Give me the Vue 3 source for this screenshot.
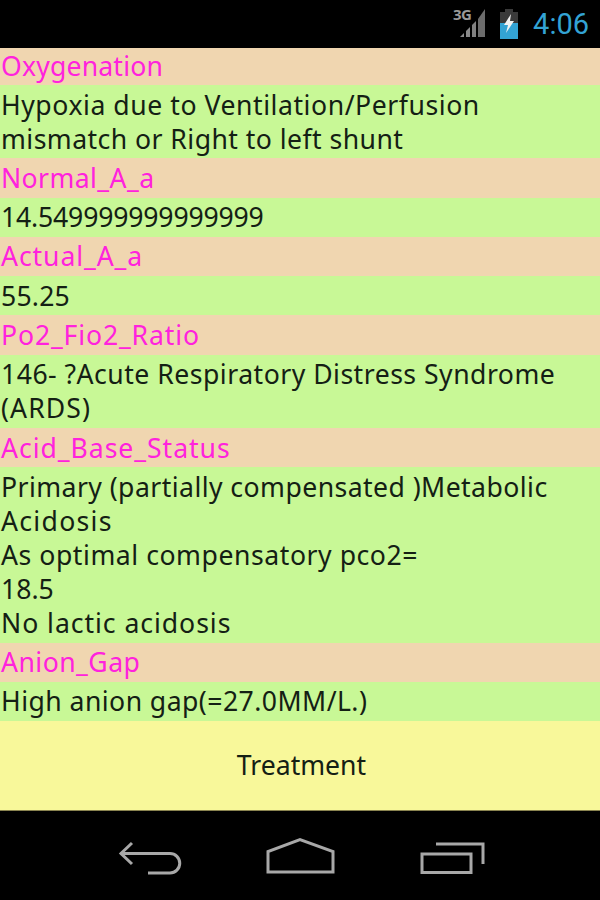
<script setup>
const rows = [
  { title: 'Oxygenation', ts: 0.18, lines: [['Hypoxia due to Ventilation/Perfusion', 0.55], ['mismatch or Right to left shunt', 0.45]] },
  { title: 'Normal_A_a', ts: 0.4, lines: [['14.549999999999999', -0.17]] },
  { title: 'Actual_A_a', ts: 0.9, lines: [['55.25', 0.2]] },
  { title: 'Po2_Fio2_Ratio', ts: 0.85, lines: [['146- ?Acute Respiratory Distress Syndrome', 0.49], ['(ARDS)', 1.1]] },
  { title: 'Acid_Base_Status', ts: 0.95, lines: [['Primary (partially compensated )Metabolic', 0.44], ['Acidosis', 1.3], ['As optimal compensatory pco2=', 0.55], ['18.5', 0], ['No lactic acidosis', 0.95]] },
  { title: 'Anion_Gap', ts: 0.45, lines: [['High anion gap(=27.0MM/L.)', 0.45]] },
]
</script>

<template>
  <div class="screen">
    <header class="status">
      <svg class="signal" width="33" height="34" viewBox="0 -4 33 34">
        <text x="0" y="12" class="net">3G</text>
        <path d="M7 29 L11 25 V29 Z" fill="#8a8a8a" />
        <path d="M13 23 L17 19 V29 H13 Z" fill="#8a8a8a" />
        <path d="M19 17 L23 13 V29 H19 Z" fill="#808080" />
        <path d="M25 11 L32 1 V29 H25 Z" fill="#6c6c6c" />
      </svg>
      <svg class="battery" width="18" height="30" viewBox="0 0 18 30">
        <path d="M5 0 H13 V3 H18 V30 H0 V3 H5 Z" fill="#3a3a3a" />
        <rect x="0" y="14" width="18" height="16" fill="#33a3d4" />
        <path d="M11 5 L4 16 H8 L6 24 L14 12 H10 Z" fill="#f2f2f2" />
      </svg>
      <span class="clock">4:06</span>
    </header>

    <main class="content">
      <template v-for="row in rows" :key="row.title">
        <div class="row title" :style="{ letterSpacing: row.ts + 'px' }">{{ row.title }}</div>
        <div class="row body">
          <div v-for="line in row.lines" :key="line[0]" :style="{ letterSpacing: line[1] + 'px' }">{{ line[0] }}</div>
        </div>
      </template>
      <button class="action">Treatment</button>
    </main>

    <nav class="nav">
      <svg width="400" height="89" viewBox="0 1 400 89" fill="none" stroke="#a8a8a8" stroke-width="3">
        <path d="M32 33 L21 43.5 L32 54" />
        <path d="M22 43.5 H70 A 9.75 9.75 0 0 1 70 63 H48" />
        <path d="M168 62 V41.5 L200 29.5 L233 41.5 V62 Z" />
        <rect x="322" y="44" width="49" height="18.5" />
        <path d="M336 34 H383 V54" />
      </svg>
    </nav>
  </div>
</template>

<style scoped>
.screen {
  width: 600px;
  height: 900px;
  display: flex;
  flex-direction: column;
  background: #000;
  font-family: "Noto Sans", "Open Sans", sans-serif;
  overflow: hidden;
}
.status {
  height: 47.5px;
  flex: none;
  display: flex;
  align-items: center;
  justify-content: flex-end;
  padding-right: 11px;
  box-sizing: border-box;
}
.signal { margin-right: 14px; margin-bottom: 5px; }
.net { font-size: 15px; font-weight: 700; letter-spacing: -0.5px; fill: #9a9a9a; font-family: "Noto Sans", sans-serif; }
.battery { margin-right: 15px; }
.clock {
  font-size: 29px;
  color: #33a3d4;
  font-family: Roboto, "Noto Sans", sans-serif;
}
.content {
  height: 763.5px;
  flex: none;
  display: flex;
  flex-direction: column;
}
.row {
  flex: none;
  padding: 2.65px 0 2.65px 1px;
  font-size: 26.6px;
  line-height: 34px;
  white-space: nowrap;
}
.title { background: #f0d6b0; color: #ff22dd; }
.title:first-child { padding-top: 1.75px; padding-bottom: 1.75px; }
.body { background: #c8f896; color: #142014; }
.action {
  flex: 1;
  border: 0;
  padding: 0 0 2px 3px;
  font: inherit;
  font-size: 26.6px;
  color: #142014;
  background: #f8f89a;
  border-bottom: 1px solid #8a8450;
}
.nav {
  height: 89px;
  flex: none;
  display: flex;
  justify-content: center;
}
</style>
